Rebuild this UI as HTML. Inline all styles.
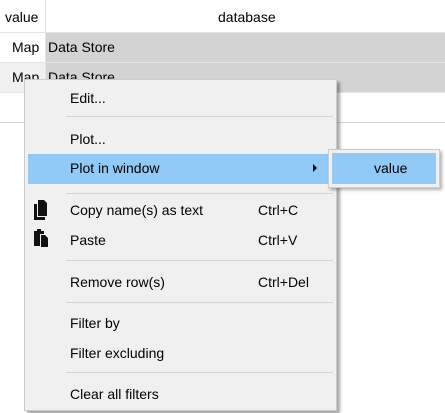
<!DOCTYPE html>
<html><head><style>
body{margin:0;width:445px;height:413px;background:#fff;position:relative;overflow:hidden;font-family:"Segoe UI","Liberation Sans",sans-serif;font-size:14px;color:#000}
.a{position:absolute}
.t{position:absolute;white-space:nowrap;line-height:20px}
.sep{position:absolute;left:41px;width:267px;height:1px;background:#d4d4d4}
</style></head><body>
<div class="a" style="left:45px;top:0;width:1px;height:123px;background:#e5e5e5"></div>
<div class="t" style="left:5px;top:7px">value</div>
<div class="t" style="left:218px;top:7px">database</div>
<div class="a" style="left:0;top:32px;width:445px;height:1px;background:#e5e5e5"></div>
<div class="a" style="left:46px;top:33px;width:399px;height:29px;background:#d3d3d3"></div>
<div class="a" style="left:0;top:62px;width:445px;height:1px;background:#e5e5e5"></div>
<div class="a" style="left:0;top:63px;width:45px;height:29px;background:#f0f0f0"></div>
<div class="a" style="left:46px;top:63px;width:399px;height:29px;background:#d3d3d3"></div>
<div class="a" style="left:0;top:92px;width:445px;height:1px;background:#e5e5e5"></div>
<div class="a" style="left:0;top:122px;width:445px;height:1px;background:#d4d4d4"></div>
<div class="t" style="left:12px;top:37px">Map</div>
<div class="t" style="left:48px;top:37px">Data Store</div>
<div class="t" style="left:12px;top:67px">Map</div>
<div class="t" style="left:48px;top:67px">Data Store</div>

<div class="a" style="left:24px;top:79px;width:311px;height:330px;background:#f0f0f0;border:1px solid #ccc;box-shadow:3px 3px 3px rgba(0,0,0,.35)">
 <div class="t" style="left:45px;top:8px">Edit...</div>
 <div class="sep" style="top:36px"></div>
 <div class="t" style="left:45px;top:49px">Plot...</div>
 <div class="a" style="left:3px;top:74px;width:305px;height:30px;background:#91c9f7"></div>
 <div class="t" style="left:45px;top:78px">Plot in window</div>
 <div class="a" style="left:288px;top:84px;width:0;height:0;border-top:4px solid transparent;border-bottom:4px solid transparent;border-left:4px solid #000"></div>
 <div class="sep" style="top:113px"></div>
 <svg class="a" style="left:9px;top:120px" width="14" height="20" viewBox="0 0 14 20"><path d="M4 0h6l3 3v13H4z M0 4h3v13h8v3H0z" fill="#111"/></svg>
 <div class="t" style="left:45px;top:120px">Copy name(s) as text</div>
 <div class="t" style="left:233px;top:120px">Ctrl+C</div>
 <svg class="a" style="left:9px;top:149px" width="14" height="20" viewBox="0 0 14 20"><path d="M0 2h3V0h4v2h3v3H6v12H0z M7 6h4l3 3v9H7z" fill="#111"/></svg>
 <div class="t" style="left:45px;top:150px">Paste</div>
 <div class="t" style="left:233px;top:150px">Ctrl+V</div>
 <div class="sep" style="top:180px"></div>
 <div class="t" style="left:45px;top:192px">Remove row(s)</div>
 <div class="t" style="left:233px;top:192px">Ctrl+Del</div>
 <div class="sep" style="top:222px"></div>
 <div class="t" style="left:45px;top:233px">Filter by</div>
 <div class="t" style="left:45px;top:263px">Filter excluding</div>
 <div class="sep" style="top:292px"></div>
 <div class="t" style="left:45px;top:304px">Clear all filters</div>
</div>

<div class="a" style="left:328px;top:149px;width:110px;height:37px;background:#f0f0f0;border:1px solid #ccc;box-shadow:2px 2px 3px rgba(0,0,0,.3)">
 <div class="a" style="left:3px;top:3px;width:104px;height:31px;background:#91c9f7"></div>
 <div class="t" style="left:45px;top:8px">value</div>
</div>
</body></html>
